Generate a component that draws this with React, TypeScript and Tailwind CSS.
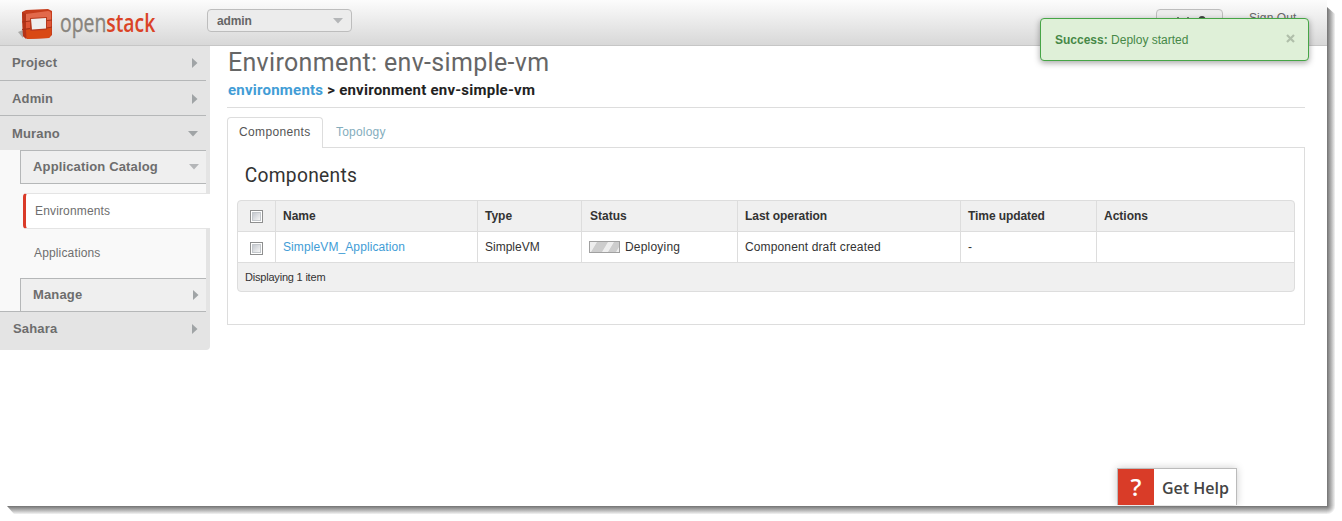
import type { ReactNode } from "react";

function Arrow({ down = false, light = false }: { down?: boolean; light?: boolean }) {
  return down ? (
    <svg width="10" height="6" viewBox="0 0 10 6" className="shrink-0">
      <path d="M0 0H10L5 5.5Z" fill={light ? "#b4b6b8" : "#a0a4a6"} />
    </svg>
  ) : (
    <svg width="6" height="10" viewBox="0 0 6 10" className="shrink-0">
      <path d="M0 0V10L5.5 5Z" fill="#a0a4a6" />
    </svg>
  );
}

function Logo() {
  return (
    <svg width="35" height="32" viewBox="0 0 35 32" className="shrink-0">
      <path d="M0 24L5 22V30Z" fill="#aaa9a7" />
      <path d="M4 4L8 2L30 1L34 3V27L31 30L9 31L5 28Z" fill="#c63d1c" />
      <path d="M4 4L8 6V31L5 28Z" fill="#b53418" />
      <path d="M8 6L30 3Q33 3 33 6V12H28V10L12 11V13L8 14Z" fill="#e2694b" />
      <path d="M8 14L13 13V20L8 21ZM28 12.5L33 12V19L28 20Z" fill="#df5637" />
      <path d="M8 22L13 21V23L28 22V20L33 19V27L31 30L9 31Z" fill="#d94914" />
      <path d="M12 10L29 9V21.5L12 22.5Z" fill="#b5391d" />
      <path d="M13 11L28 10V20.5L14 21.5Z" fill="#eeeeee" />
      <path d="M4 14L12 13M4 21.5L12 20.5M29 12.5L34 12M29 20L34 19" stroke="#a53018" strokeWidth="1" />
    </svg>
  );
}

function TopItem({ label, down, className }: { label: string; down?: boolean; className: string }) {
  return (
    <div className={"flex w-[206px] items-center justify-between pr-2 text-[13px] font-bold tracking-[0.15px] text-[#6d6d6d] " + className}>
      <span>{label}</span>
      <Arrow down={down} />
    </div>
  );
}

function Group({ label, down }: { label: string; down?: boolean }) {
  return (
    <div className="ml-5 flex w-[186px] items-center justify-between border-t border-l border-[#b5b7b8] bg-[#efefef] pr-[7px] pl-3 text-[13px] font-bold text-[#6d6d6d]">
      <span className="tracking-[0.15px]">{label}</span>
      <Arrow down={down} light={down} />
    </div>
  );
}

function Checkbox() {
  return (
    <span className="block size-[13px] border border-[#8e8f8f] bg-white p-px">
      <span className="block size-[9px] border border-[#c3c7cb] bg-linear-to-br from-[#c5c9cf] to-[#f6f6f6]" />
    </span>
  );
}

function Cell({ children, last }: { children?: ReactNode; last?: boolean }) {
  return <div className={"flex items-center pl-[7px] " + (last ? "" : "border-r border-[#dddddd]")}>{children}</div>;
}

const columns = "grid grid-cols-[38px_202px_104px_156px_223px_136px_1fr]";

export default function App() {
  return (
    <div className="relative h-[521px] w-[1342px] overflow-hidden bg-white font-['Liberation_Sans',Arial,sans-serif] text-xs text-[#333333]">
      <div className="absolute top-[7px] left-[1327px] h-[499px] w-[8px] bg-linear-to-r from-[#737373] to-[#f4f4f4] [clip-path:polygon(0_0,100%_7px,100%_100%,0_100%)]" />
      <div className="absolute top-[506px] left-[7px] h-[8px] w-[1320px] bg-linear-to-b from-[#737373] to-[#f4f4f4] [clip-path:polygon(0_0,100%_0,100%_100%,7px_100%)]" />
      <div className="absolute top-[506px] left-[1327px] size-2 bg-radial-[at_0%_0%] from-[#737373] to-white to-75%" />

      <div className="relative h-[506px] w-[1327px] overflow-hidden bg-white">
        <header className="flex h-[46px] items-start border-b border-[#c6c6c6] bg-linear-to-b from-[#fcfcfc] to-[#d8d8d8]">
          <div className="flex pt-2 pl-[18px]">
            <Logo />
            <div className="-mt-[3px] ml-[7px] w-[96px] origin-left scale-x-[0.745] font-['Open_Sans',sans-serif] text-[26px] leading-[34px] whitespace-nowrap text-[#88847d] [-webkit-text-stroke:0.4px]">
              open<span className="font-semibold text-[#da4326] [-webkit-text-stroke:0px]">stack</span>
            </div>
          </div>
          <div className="mt-[9px] ml-[51px] flex h-[23px] w-[145px] items-center justify-between rounded-[4px] border border-[#bdbdbd] bg-[#ececec] pr-2 pl-[9px] text-xs font-bold text-[#666666]">
            <span className="tracking-[-0.1px]">admin</span>
            <Arrow down light />
          </div>
          <div className="mt-[9px] ml-auto flex h-[26px] w-[67px] items-center justify-center rounded-[4px] border border-[#bdbdbd] bg-[#ececec]">
            <svg width="32" height="14" viewBox="0 0 32 14">
              <path d="M4 2V11M14 2V11M1 8H7M11 8H17" stroke="#555555" strokeWidth="1.5" />
              <circle cx="28" cy="4.5" r="3.5" fill="#444444" />
              <path d="M23 14Q28 5 33 14Z" fill="#444444" />
            </svg>
          </div>
          <div className="mt-[10px] mr-[30px] ml-[26px] w-12 text-xs tracking-[0.1px] whitespace-nowrap text-[#666666]">Sign Out</div>
        </header>

        <div className="flex items-start">
          <nav className="h-[304px] w-[210px] shrink-0 rounded-br-[4px] bg-[#e4e4e4]">
            <TopItem label="Project" className="h-[35px] border-b border-[#b5b7b8] pl-3" />
            <TopItem label="Admin" className="h-[35px] border-b border-[#b5b7b8] pt-px pl-3" />
            <TopItem label="Murano" down className="h-[34px] pt-px pl-3" />
            <div className="h-[162px] w-[206px] border-b border-[#b5b7b8] bg-[#f9f9f9]">
              <div className="grid h-[34px] border-b border-transparent">
                <Group label="Application Catalog" down />
              </div>
              <div className="-mt-px ml-5 h-px w-[186px] bg-[#b5b7b8]" />
              <div className="mt-[9px] ml-[23px] flex h-9 w-[187px] items-center rounded-l-[4px] border-y border-l-[3px] border-y-[#e4e4e4] border-l-[#da3b29] bg-white pl-[9px] tracking-[0.15px] text-[#6e6e6e]">
                Environments
              </div>
              <div className="flex h-[47px] items-center pl-[34px] tracking-[0.15px] text-[#6e6e6e]">Applications</div>
              <div className="mt-[2px] grid h-[33px]">
                <Group label="Manage" />
              </div>
            </div>
            <TopItem label="Sahara" className="h-[33px] pl-[13px]" />
          </nav>

          <main className="ml-[17px] w-[1078px]">
            <div className="h-[62px] border-b border-[#dddddd] font-['Roboto',sans-serif]">
              <h1 className="h-[33px] w-max origin-left scale-x-[0.96] pl-px text-[26px] leading-[32px] tracking-[0.35px] whitespace-nowrap text-[#666666]">
                Environment: env-simple-vm
              </h1>
              <p className="pl-px text-[15px] leading-[23px] font-bold tracking-[0.23px] whitespace-nowrap text-[#222222]">
                <span className="text-[#429dd6]">environments</span> &gt; environment env-simple-vm
              </p>
            </div>
            <div className="mt-[9px] flex h-[31px]">
              <div className="relative -mb-px h-[31px] w-24 rounded-t-[4px] border border-b-0 border-[#dddddd] bg-white pl-[11px] leading-[28px] tracking-[0.35px] text-[#555555]">
                Components
              </div>
              <div className="pl-[13px] leading-[30px] tracking-[0.2px] text-[#84adbd]">Topology</div>
            </div>
            <section className="-mt-px h-[178px] border border-[#dddddd] px-[9px]">
              <h2 className="h-[52px] w-max origin-left scale-x-[0.96] pl-2 font-['Roboto',sans-serif] text-[20px] leading-[54px] tracking-[0.3px] text-[#333333]">
                Components
              </h2>
              <div className="h-[92px] w-[1058px] overflow-hidden rounded-[4px] border border-[#dddddd] bg-[#f0f0f0]">
                <div className={columns + " h-[31px] border-b border-[#dddddd] font-bold"}>
                  <div className="flex items-center border-r border-[#dddddd] pl-3"><Checkbox /></div>
                  <Cell>Name</Cell>
                  <Cell>Type</Cell>
                  <Cell><span className="pl-px">Status</span></Cell>
                  <Cell><span className="tracking-[-0.05px]">Last operation</span></Cell>
                  <Cell><span className="tracking-[-0.08px]">Time updated</span></Cell>
                  <Cell last>Actions</Cell>
                </div>
                <div className={columns + " h-[31px] border-b border-[#dddddd] bg-white"}>
                  <div className="flex items-center border-r border-[#dddddd] pt-[3px] pl-3"><Checkbox /></div>
                  <Cell><span className="tracking-[0.1px] text-[#429dd6]">SimpleVM_Application</span></Cell>
                  <Cell>SimpleVM</Cell>
                  <Cell>
                    <svg width="31" height="12" viewBox="0 0 31 12" className="mr-[5px]">
                      <rect x=".5" y=".5" width="30" height="11" fill="#cdcdcd" stroke="#a0a0a0" />
                      <path d="M1 10V1H8L2 11H1ZM13 11L19 1H25L19 11ZM27 11L30 6V11Z" fill="#eeeeee" />
                    </svg>
                    <span className="tracking-[0.2px]">Deploying</span>
                  </Cell>
                  <Cell><span className="tracking-[0.13px]">Component draft created</span></Cell>
                  <Cell>-</Cell>
                  <Cell last />
                </div>
                <div className="pl-[7px] text-[11px] leading-[28px] tracking-[-0.2px]">Displaying 1 item</div>
              </div>
            </section>
          </main>
        </div>

        <div className="absolute top-[18px] left-[1040px] flex h-[43px] w-[269px] items-center justify-between rounded-[4px] border border-[#46a546] bg-[#dff0d8] pr-[13px] pl-[14px] text-[#468847] shadow-[0_2px_6px_rgba(0,0,0,0.35)]">
          <span><b>Success:</b> Deploy started</span>
          <svg width="9" height="9" viewBox="0 0 9 9" className="mb-[3px]">
            <path d="M1 1L8 8M8 1L1 8" stroke="#b0bfaa" strokeWidth="2.2" />
          </svg>
        </div>

        <div className="absolute top-[468px] left-[1117px] flex h-[37px] w-[120px] border border-b-0 border-[#bbbbbb] bg-white font-['Open_Sans',sans-serif] font-semibold shadow-[0_0_8px_rgba(0,0,0,0.2)]">
          <div className="w-9 bg-[#d93c28] text-center text-[24px] leading-[36px] font-semibold text-white">?</div>
          <div className="pl-2 text-[16px] leading-[38px] whitespace-nowrap text-[#444444]">Get Help</div>
        </div>
      </div>
    </div>
  );
}
